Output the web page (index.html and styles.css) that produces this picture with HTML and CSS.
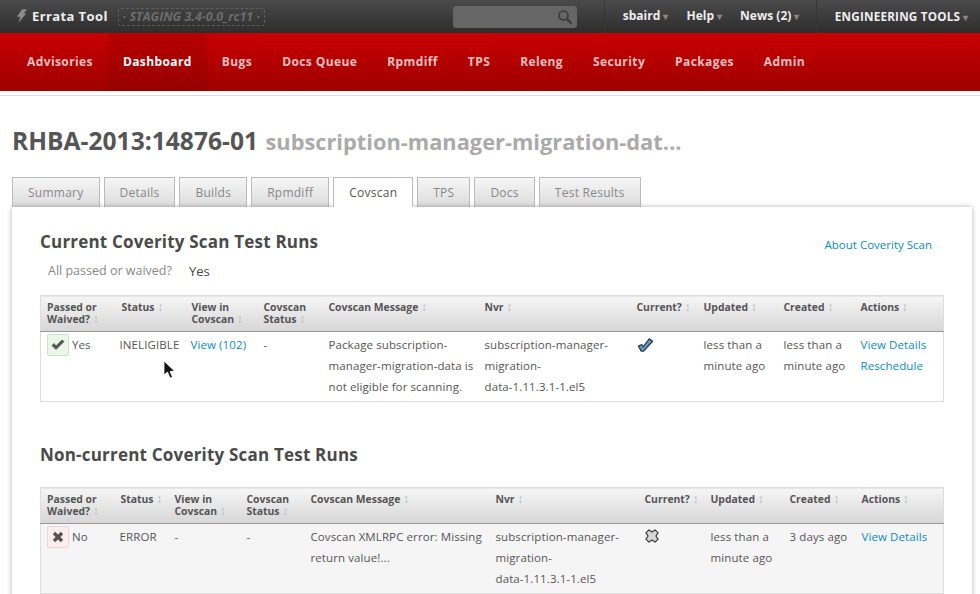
FILE: index.html
```html
<!DOCTYPE html>
<html>
<head>
    <meta charset="utf-8">
    <title>Errata Tool</title>
    <link rel="stylesheet" href="styles.css">
</head>
<body>

<div class="topbar">
    <svg class="bolt" width="12" height="16" viewBox="0 0 14 18"><path d="M7 1 L13 1 L9 6 L12 6 L3 17 L5 10 L1 10 Z" fill="#8a8a8a"/></svg>
    <span class="brand">Errata Tool</span>
    <span class="staging">&middot; STAGING 3.4-0.0_rc11 &middot;</span>
    <div class="search">
        <svg width="16" height="16" viewBox="0 0 16 16"><circle cx="6.5" cy="6.5" r="4.5" fill="none" stroke="#3a3a3a" stroke-width="1.6"/><path d="M10 10 L14.5 14.5" stroke="#3a3a3a" stroke-width="2.4"/></svg>
    </div>
    <div class="usermenu">
        <a class="first">sbaird <i>&#9662;</i></a>
        <a>Help <i>&#9662;</i></a>
        <a>News (2) <i>&#9662;</i></a>
    </div>
    <a class="tools">ENGINEERING TOOLS <i>&#9662;</i></a>
</div>

<div class="mainnav">
    <a>Advisories</a>
    <a class="active">Dashboard</a>
    <a>Bugs</a>
    <a>Docs Queue</a>
    <a>Rpmdiff</a>
    <a>TPS</a>
    <a>Releng</a>
    <a>Security</a>
    <a>Packages</a>
    <a>Admin</a>
</div>
<div class="navline"></div>

<h1>RHBA-2013:14876-01 <small>subscription-manager-migration-dat...</small></h1>

<div class="tabs">
    <a>Summary</a>
    <a>Details</a>
    <a>Builds</a>
    <a>Rpmdiff</a>
    <a class="active">Covscan</a>
    <a>TPS</a>
    <a>Docs</a>
    <a>Test Results</a>
</div>

<div class="panel">
    <div class="panelhead">
        <h2>Current Coverity Scan Test Runs</h2>
        <a class="link about">About Coverity Scan</a>
    </div>
    <div class="summary"><span class="label">All passed or waived?</span><span>Yes</span></div>

    <table class="runs current">
        <colgroup>
            <col class="c1"><col class="c2"><col class="c3"><col class="c4"><col class="c5">
            <col class="c6"><col class="c7"><col class="c8"><col class="c9"><col class="c10">
        </colgroup>
        <thead>
            <tr>
                <th>Passed or Waived? <i>&#8597;</i></th>
                <th>Status <i>&#8597;</i></th>
                <th>View in Covscan <i>&#8597;</i></th>
                <th>Covscan Status <i>&#8597;</i></th>
                <th>Covscan Message <i>&#8597;</i></th>
                <th>Nvr <i>&#8597;</i></th>
                <th>Current? <i>&#8597;</i></th>
                <th>Updated <i>&#8597;</i></th>
                <th>Created <i>&#8597;</i></th>
                <th>Actions <i>&#8597;</i></th>
            </tr>
        </thead>
        <tbody>
            <tr>
                <td><span class="badge ok"><svg width="14" height="12" viewBox="0 0 14 12"><path d="M1 6.5 L5 10.5 L13 2.5 L11 1 L5 7 L3 4.5 Z" fill="#555" stroke="#555" stroke-width="0.8"/></svg></span>Yes</td>
                <td class="tight">INELIGIBLE</td>
                <td class="tight"><a class="link">View (102)</a></td>
                <td>-</td>
                <td>Package subscription-<br>manager-migration-data is<br>not eligible for scanning.</td>
                <td>subscription-manager-<br>migration-<br>data-1.11.3.1-1.el5</td>
                <td><svg class="flag" width="17" height="16" viewBox="0 0 18 16"><path d="M1.5 9 L5 7.5 L6.5 10 L13 1.5 L16.5 4 L7 14.5 L4.5 14.5 Z" fill="#659cc6" stroke="#23384a" stroke-width="1.3" stroke-linejoin="round"/></svg></td>
                <td>less than a<br>minute ago</td>
                <td>less than a<br>minute ago</td>
                <td><a class="link">View Details</a><br><a class="link">Reschedule</a></td>
            </tr>
        </tbody>
    </table>

    <h2 class="second">Non-current Coverity Scan Test Runs</h2>

    <table class="runs other">
        <colgroup>
            <col class="c1"><col class="c2"><col class="c3"><col class="c4"><col class="c5">
            <col class="c6"><col class="c7"><col class="c8"><col class="c9"><col class="c10">
        </colgroup>
        <thead>
            <tr>
                <th>Passed or Waived? <i>&#8597;</i></th>
                <th>Status <i>&#8597;</i></th>
                <th>View in Covscan <i>&#8597;</i></th>
                <th>Covscan Status <i>&#8597;</i></th>
                <th>Covscan Message <i>&#8597;</i></th>
                <th>Nvr <i>&#8597;</i></th>
                <th>Current? <i>&#8597;</i></th>
                <th>Updated <i>&#8597;</i></th>
                <th>Created <i>&#8597;</i></th>
                <th>Actions <i>&#8597;</i></th>
            </tr>
        </thead>
        <tbody>
            <tr>
                <td><span class="badge bad"><svg width="12" height="12" viewBox="0 0 12 12"><path d="M2 2 L10 10 M10 2 L2 10" stroke="#555" stroke-width="3.4"/></svg></span>No</td>
                <td class="tight">ERROR</td>
                <td>-</td>
                <td>-</td>
                <td>Covscan XMLRPC error: Missing<br>return value!...</td>
                <td>subscription-manager-<br>migration-<br>data-1.11.3.1-1.el5</td>
                <td><svg class="flag" width="14" height="14" viewBox="0 0 16 16"><path d="M4.5 1 L8 3.5 L11.5 1 L15 4.5 L12.5 8 L15 11.5 L11.5 15 L8 12.5 L4.5 15 L1 11.5 L3.5 8 L1 4.5 Z" fill="#d6d6d6" stroke="#333" stroke-width="1.3" stroke-linejoin="round"/></svg></td>
                <td>less than a<br>minute ago</td>
                <td>3 days ago</td>
                <td><a class="link">View Details</a></td>
            </tr>
        </tbody>
    </table>
</div>

<svg class="cursor" width="13" height="20" viewBox="0 0 13 20"><path d="M1 1 L1 15 L4.5 12 L7 18 L9.5 17 L7 11.5 L11.5 11 Z" fill="#111" stroke="#fff" stroke-width="0.8"/></svg>

</body>
</html>
```

FILE: styles.css
```css
HTML {
    overflow: hidden;
}
BODY {
    margin: 0;
    height: 594px;
    overflow: hidden;
    background: #fff;
    font-family: "Open Sans", "Noto Sans", sans-serif;
    font-size: 12px;
    color: #555;
    position: relative;
}
A {
    text-decoration: none;
}

/* top black bar */
.topbar {
    height: 33px;
    display: flex;
    align-items: center;
    background: linear-gradient(#4a4a4a, #2d2d2d);
    color: #eee;
    font-weight: bold;
    font-size: 12px;
}
.bolt {
    margin: 0 0 2px 16px;
}
.brand {
    margin-left: 4px;
    padding-bottom: 2px;
    font-size: 13px;
    letter-spacing: 0.4px;
    color: #eee;
}
.staging {
    margin-left: 10px;
    width: 147px;
    height: 18px;
    box-sizing: border-box;
    border: 1px dashed #5e5e5e;
    border-radius: 3px;
    font-size: 12.5px;
    line-height: 16px;
    font-style: italic;
    text-align: center;
    white-space: nowrap;
    color: #6c6c6c;
}
.search {
    margin-left: 188px;
    width: 124px;
    height: 22px;
    box-sizing: border-box;
    padding: 3px 4px 0 0;
    text-align: right;
    background: #666;
    border-radius: 3px;
}
.usermenu {
    margin-left: 27px;
    padding: 0 0 0 18px;
    width: 213px;
    height: 33px;
    box-sizing: border-box;
    display: flex;
    align-items: center;
    gap: 18px;
    border-left: 1px solid #363636;
    border-right: 1px solid #363636;
}
.usermenu A, .tools {
    padding-bottom: 2px;
    color: #eee;
    white-space: nowrap;
}
.usermenu I, .tools I {
    font-style: normal;
    font-size: 10px;
    color: #888;
}
.tools {
    margin-left: 18px;
    font-size: 11.7px;
    letter-spacing: 0.2px;
}

/* red navigation */
.mainnav {
    height: 58px;
    display: flex;
    padding-left: 12px;
    background: linear-gradient(#c80000, #9e0000);
    font-weight: bold;
    font-size: 12px;
    letter-spacing: 0.4px;
}
.mainnav A {
    padding: 0 15px;
    line-height: 57px;
    color: #f0c0c0;
}
.mainnav .active {
    color: #fff;
    background: linear-gradient(#b80000, #960000);
}
.navline {
    height: 4px;
    border-bottom: 1px solid #ddd;
}

H1 {
    margin: 28px 0 0 12px;
    height: 34px;
    font-size: 24.6px;
    line-height: 34px;
    font-weight: bold;
    color: #555;
    white-space: nowrap;
}
H1 SMALL {
    margin-left: 1px;
    font-size: 21.8px;
    color: #aaa;
}

/* tabs */
.tabs {
    margin: 19px 0 0 12px;
    display: flex;
    gap: 4px;
    height: 30px;
}
.tabs A {
    padding: 0 15px;
    height: 30px;
    box-sizing: border-box;
    border: 1px solid #bbb;
    border-bottom: 0;
    background: linear-gradient(#f6f6f6, #dcdcdc);
    color: #888;
    line-height: 29px;
    letter-spacing: 0.25px;
}
.tabs .active {
    position: relative;
    z-index: 2;
    background: #fff;
    color: #555;
}

/* main box */
.panel {
    margin: 0 8px 0 12px;
    padding: 21px 28px 0 28px;
    height: 400px;
    background: #fff;
    box-shadow: 0 0 5px rgba(0, 0, 0, 0.3);
    position: relative;
}
.panelhead {
    display: flex;
    justify-content: space-between;
    align-items: flex-end;
    padding-right: 12px;
}
H2 {
    margin: 0;
    font-size: 17px;
    letter-spacing: 0.2px;
    line-height: 28px;
    font-weight: bold;
    color: #4a4a4a;
}
.about {
    font-size: 11.5px;
    line-height: 22px;
}
.link {
    color: #0a8ac8;
}
.summary {
    margin: 5px 0 0 8px;
    display: flex;
    line-height: 20px;
    font-size: 13px;
    color: #444;
}
.label {
    width: 141px;
    font-size: 12.5px;
    color: #888;
}
H2.second {
    margin-top: 39px;
}

/* test run tables */
.runs {
    width: 903px;
    table-layout: fixed;
    border-collapse: collapse;
    border: 1px solid #ddd;
}
.current {
    margin-top: 14px;
}
.other {
    margin-top: 18px;
}
.runs TH {
    height: 36px;
    box-sizing: border-box;
    padding: 5px 0 0 6px;
    vertical-align: top;
    text-align: left;
    font-size: 10.4px;
    line-height: 12px;
    font-weight: bold;
    color: #555;
    background: linear-gradient(#f6f6f6, #d6d6d6);
    border-bottom: 1px solid #999;
}
.runs TH:nth-child(1), .runs TH:nth-child(3), .runs TH:nth-child(4) {
    padding-right: 8px;
}
.runs TH I {
    font-style: normal;
    font-weight: normal;
    font-size: 12px;
    color: #bbb;
}
.runs TD {
    padding: 2px 0 4px 6px;
    vertical-align: top;
    font-size: 11.5px;
    line-height: 21px;
    letter-spacing: 0.1px;
    white-space: nowrap;
    color: #555;
}
.runs .tight {
    padding-left: 5px;
}
.current .tight:nth-child(2) {
    padding-left: 4px;
}
.other TD {
    background: #f5f5f5;
}
.badge {
    display: inline-flex;
    align-items: center;
    justify-content: center;
    width: 22px;
    height: 22px;
    box-sizing: border-box;
    margin-right: 3px;
    vertical-align: top;
    border-radius: 2px;
}
.ok {
    background: #e9f8e6;
    border: 1px solid #cfe3cc;
}
.bad {
    background: #fdeeee;
    border: 1px solid #ebd5d5;
}
.flag {
    display: block;
    margin-top: 3px;
}

.current .c1 { width: 75px; }
.current .c2 { width: 70px; }
.current .c3 { width: 72px; }
.current .c4 { width: 65px; }
.current .c5 { width: 156px; }
.current .c6 { width: 152px; }
.current .c7 { width: 67px; }
.current .c8 { width: 80px; }
.current .c9 { width: 77px; }
.current .c10 { width: 89px; }

.other .c1 { width: 74px; }
.other .c2 { width: 54px; }
.other .c3 { width: 72px; }
.other .c4 { width: 64px; }
.other .c5 { width: 185px; }
.other .c6 { width: 149px; }
.other .c7 { width: 66px; }
.other .c8 { width: 79px; }
.other .c9 { width: 72px; }
.other .c10 { width: 88px; }

/* mouse pointer in the screenshot */
.cursor {
    position: absolute;
    left: 163px;
    top: 360px;
    z-index: 5;
}
```
